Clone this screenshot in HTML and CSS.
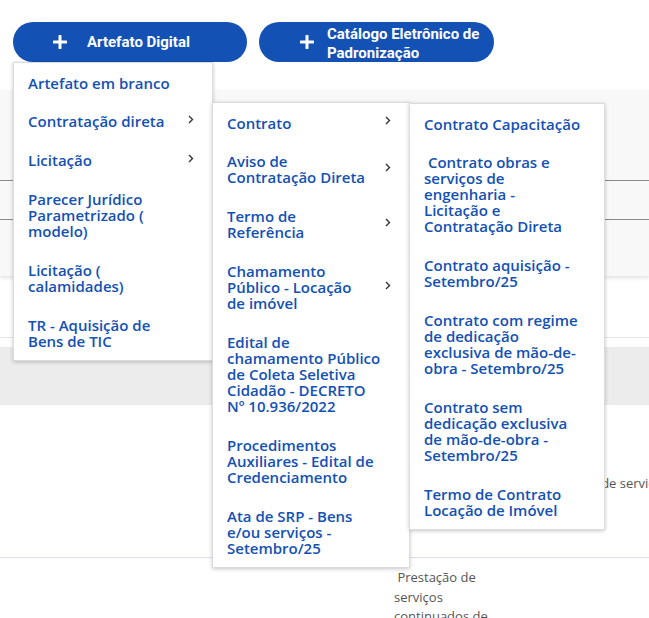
FILE: index.html
```html
<!DOCTYPE html>
<html lang="pt-BR">
<head>
<meta charset="utf-8">
<title>Artefatos</title>
<link rel="stylesheet" href="styles.css">
</head>
<body>
<div class="toolbar">
  <button class="btn">
    <svg class="plus" width="14" height="14" viewBox="0 0 14 14"><path d="M7 1v12M1 7h12" stroke="#fff" stroke-width="3" stroke-linecap="round"/></svg>
    <span class="btn-label">Artefato Digital</span>
  </button>
  <button class="btn btn-two">
    <svg class="plus" width="14" height="14" viewBox="0 0 14 14"><path d="M7 1v12M1 7h12" stroke="#fff" stroke-width="3" stroke-linecap="round"/></svg>
    <span class="btn-label">Catálogo Eletrônico de<br>Padronização</span>
  </button>
</div>

<div class="panel">
  <div class="panel-rule rule-a"></div>
  <div class="panel-rule rule-b"></div>
</div>

<div class="table">
  <div class="band"></div>
  <div class="row">
    <span class="cell-clip">Prestação de serviços continuados</span>
  </div>
  <div class="row-next">
    <p class="cell-text">&nbsp;Prestação de<br>serviços<br>continuados de</p>
  </div>
</div>

<ul class="menu menu-1">
  <li class="item">Artefato em branco</li>
  <li class="item has-sub">Contratação direta<svg class="chev" width="6" height="9" viewBox="0 0 6 9"><path d="M1 1l3.5 3.5L1 8" fill="none" stroke="#333" stroke-width="1.4"/></svg></li>
  <li class="item has-sub">Licitação<svg class="chev" width="6" height="9" viewBox="0 0 6 9"><path d="M1 1l3.5 3.5L1 8" fill="none" stroke="#333" stroke-width="1.4"/></svg></li>
  <li class="item">Parecer Jurídico<br>Parametrizado (<br>modelo)</li>
  <li class="item">Licitação (<br>calamidades)</li>
  <li class="item">TR - Aquisição de<br>Bens de TIC</li>
</ul>

<ul class="menu menu-2">
  <li class="item has-sub">Contrato<svg class="chev" width="6" height="9" viewBox="0 0 6 9"><path d="M1 1l3.5 3.5L1 8" fill="none" stroke="#333" stroke-width="1.4"/></svg></li>
  <li class="item has-sub">Aviso de<br>Contratação Direta<svg class="chev" width="6" height="9" viewBox="0 0 6 9"><path d="M1 1l3.5 3.5L1 8" fill="none" stroke="#333" stroke-width="1.4"/></svg></li>
  <li class="item has-sub">Termo de<br>Referência<svg class="chev" width="6" height="9" viewBox="0 0 6 9"><path d="M1 1l3.5 3.5L1 8" fill="none" stroke="#333" stroke-width="1.4"/></svg></li>
  <li class="item has-sub">Chamamento<br>Público - Locação<br>de imóvel<svg class="chev" width="6" height="9" viewBox="0 0 6 9"><path d="M1 1l3.5 3.5L1 8" fill="none" stroke="#333" stroke-width="1.4"/></svg></li>
  <li class="item">Edital de<br>chamamento Público<br>de Coleta Seletiva<br>Cidadão - DECRETO<br>Nº 10.936/2022</li>
  <li class="item">Procedimentos<br>Auxiliares - Edital de<br>Credenciamento</li>
  <li class="item">Ata de SRP - Bens<br>e/ou serviços -<br>Setembro/25</li>
</ul>

<ul class="menu menu-3">
  <li class="item">Contrato Capacitação</li>
  <li class="item">&nbsp;Contrato obras e<br>serviços de<br>engenharia -<br>Licitação e<br>Contratação Direta</li>
  <li class="item">Contrato aquisição -<br>Setembro/25</li>
  <li class="item">Contrato com regime<br>de dedicação<br>exclusiva de mão-de-<br>obra - Setembro/25</li>
  <li class="item">Contrato sem<br>dedicação exclusiva<br>de mão-de-obra -<br>Setembro/25</li>
  <li class="item">Termo de Contrato<br>Locação de Imóvel</li>
</ul>
</body>
</html>
```

FILE: styles.css
```css
* { box-sizing: border-box; }

html, body {
  margin: 0;
  padding: 0;
  background: #fff;
  overflow: hidden;
}

body {
  position: relative;
  width: 649px;
  height: 618px;
  font-family: "Open Sans", "Noto Sans", sans-serif;
}

.toolbar {
  display: flex;
  gap: 12px;
  padding: 22px 0 0 13px;
}

.btn {
  display: flex;
  align-items: center;
  height: 40px;
  border: 0;
  border-radius: 20px;
  background: #1351b4;
  color: #fff;
  font-family: "Liberation Sans Narrow", "Roboto", sans-serif;
  font-weight: 700;
  font-size: 15px;
  line-height: 18px;
  text-align: left;
  padding: 0 0 0 40px;
  width: 234px;
  cursor: pointer;
}

.btn .plus { flex: none; }

.btn .btn-label { margin-left: 20px; }

.btn-two { width: 235px; padding-left: 41px; }
.btn-two .btn-label { margin-left: 13px; line-height: 19px; padding-top: 3px; }

.panel {
  position: relative;
  margin-top: 28px;
  height: 186px;
  background: #f8f8f8;
  box-shadow: 0 2px 4px rgba(0, 0, 0, 0.12);
}

.panel-rule {
  position: absolute;
  left: 0;
  right: 0;
  height: 1px;
  background: #8a8a8a;
}
.rule-a { top: 90px; }
.rule-b { top: 129px; }

.table {
  margin-top: 61px;
  border-top: 1px solid #e6e6e6;
  padding-top: 9px;
}

.band {
  height: 58px;
  background: #ececec;
}

.row {
  height: 153px;
  border-bottom: 1px solid #dcdcf3;
  padding: 66px 0 0 538px;
  white-space: nowrap;
  overflow: hidden;
}

.cell-clip, .cell-text {
  font-family: "Open Sans", sans-serif;
  font-size: 13px;
  color: #555;
}

.row-next { padding: 10px 0 0 394px; }

.cell-text {
  margin: 0;
  line-height: 19.5px;
}

.menu {
  position: absolute;
  margin: 0;
  padding: 0;
  list-style: none;
  background: #fff;
  border: 1px solid #dcdcdc;
  box-shadow: 0 1px 4px rgba(0, 0, 0, 0.22);
}

.menu-1 { left: 13px; top: 62px; width: 200px; }
.menu-2 { left: 212px; top: 102px; width: 198px; }
.menu-3 { left: 409px; top: 103px; width: 196px; }

.item {
  position: relative;
  padding: 11.5px 14px 11.4px;
  font-size: 15px;
  line-height: 16px;
  font-weight: 600;
  color: #1351b4;
  white-space: nowrap;
}

.chev {
  position: absolute;
  right: 18px;
  top: 50%;
  margin-top: -6px;
}
```
